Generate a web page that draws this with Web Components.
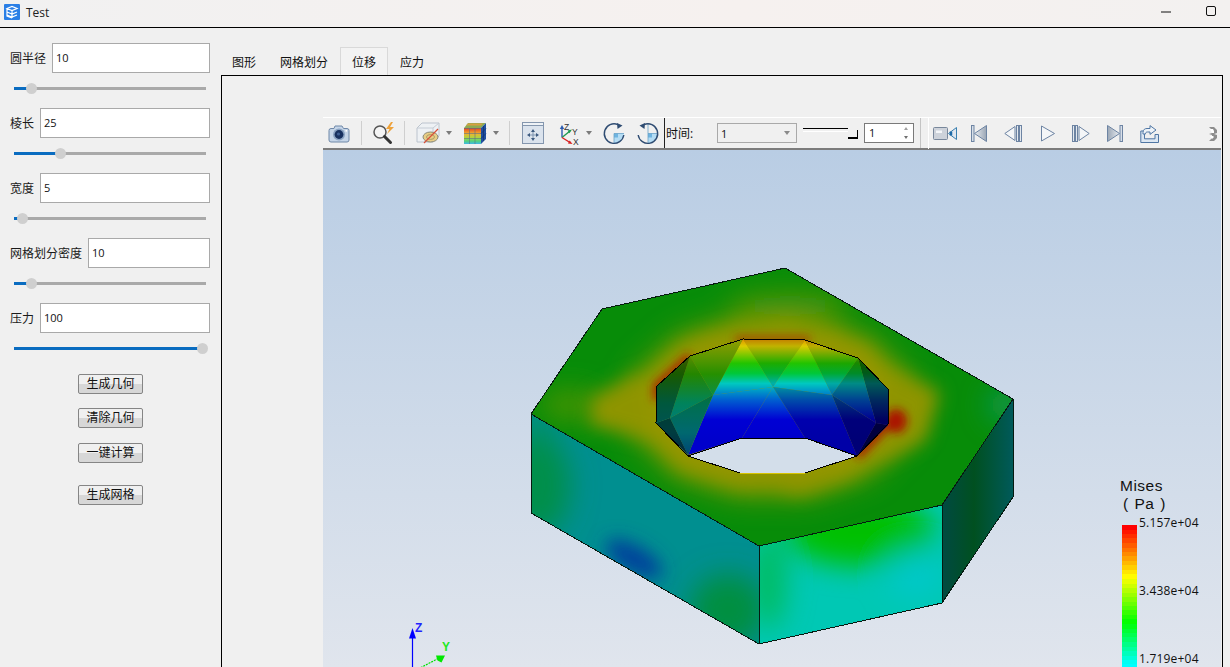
<!DOCTYPE html>
<html>
<head>
<meta charset="utf-8">
<title>Test</title>
<style>
  html, body { margin: 0; height: 667px; overflow: hidden; background: #f0f0f0; }
  body { font: 12px "Open Sans", "Noto Sans CJK SC", sans-serif; color: #111; }
  .main { display: flex; align-items: flex-start; }
</style>
</head>
<body>
<app-titlebar title-text="Test"></app-titlebar>
<div class="main">
  <param-panel>
    <param-field label="圆半径" value="10" pct="9"></param-field>
    <param-field label="棱长" value="25" pct="24"></param-field>
    <param-field label="宽度" value="5" pct="4"></param-field>
    <param-field label="网格划分密度" value="10" pct="9"></param-field>
    <param-field label="压力" value="100" pct="98"></param-field>
    <action-button style="margin-top:6px">生成几何</action-button>
    <action-button style="margin-top:14px">清除几何</action-button>
    <action-button style="margin-top:15px">一键计算</action-button>
    <action-button style="margin-top:22px">生成网格</action-button>
  </param-panel>
  <tab-widget tabs="图形,网格划分,位移,应力" active="2">
    <post-viewer></post-viewer>
  </tab-widget>
</div>

<script>
const sharedFont = `"Open Sans", "Noto Sans CJK SC", sans-serif`;

class AppTitlebar extends HTMLElement {
  constructor() {
    super();
    this.attachShadow({ mode: "open" });
    this.shadowRoot.innerHTML = `
    <style>
      :host { display: flex; align-items: center; height: 27px; border-bottom: 1px solid #000;
        background: linear-gradient(90deg, #f1f1f1, #f6f1ef 60%, #f3f1f0); font: 12px ${sharedFont}; color: #222; }
      svg { display: block; flex: none; }
      .logo { margin: -3px 6px 0 4px; }
      .name { flex: 1; margin-top: -3px; }
      .min { margin: -3px 35px 0 0; }
      .max { margin: -5px 14px 0 0; }
    </style>
    <svg class="logo" width="16" height="16" viewBox="0 0 16 16">
      <rect width="16" height="16" rx="1" fill="#2a7fe6"/>
      <path d="M3 4.500 8 2.500l5 2-5 2zM3 4.500v7.500l5 2M3 8l5 2 5-2M3 11l5 2 5-2M8 6.500V14" fill="none" stroke="#fff" stroke-width="1.200"/>
    </svg>
    <span class="name"></span>
    <svg class="min" width="10" height="2" viewBox="0 0 10 2"><path d="M0 1h10" stroke="#111"/></svg>
    <svg class="max" width="10" height="10" viewBox="0 0 10 10"><rect x=".5" y=".5" width="9" height="9" rx="1.500" fill="none" stroke="#111"/></svg>`;
  }
  connectedCallback() {
    this.shadowRoot.querySelector(".name").textContent = this.getAttribute("title-text");
  }
}
customElements.define("app-titlebar", AppTitlebar);

class ParamPanel extends HTMLElement {
  constructor() {
    super();
    this.attachShadow({ mode: "open" });
    this.shadowRoot.innerHTML = `
    <style>
      :host { display: flex; flex-direction: column; flex: none; width: 221px; box-sizing: border-box; padding-top: 15px; }
    </style>
    <slot></slot>`;
  }
}
customElements.define("param-panel", ParamPanel);

class ParamField extends HTMLElement {
  constructor() {
    super();
    this.attachShadow({ mode: "open" });
    this.shadowRoot.innerHTML = `
    <style>
      :host { display: block; height: 65px; box-sizing: border-box; padding: 0 11px 0 10px; font: 12px ${sharedFont}; color: #1a1a1a; }
      .row { display: flex; align-items: center; gap: 6px; height: 30px; }
      .box { flex: 1; height: 30px; box-sizing: border-box; border: 1px solid #a9a9a9; background: #fff;
        padding-left: 3px; line-height: 28px; font-size: 11px; color: #111; }
      .slider { position: relative; width: 192px; height: 3px; margin: 14px 0 0 4px; background: #a9a9a9; }
      .fill { height: 3px; background: #0a6cc0; }
      .thumb { position: absolute; top: -4px; width: 11px; height: 11px; margin-left: -5px; border-radius: 50%; background: #cfcfcf; }
    </style>
    <div class="row"><span class="lab"></span><div class="box"></div></div>
    <div class="slider"><div class="fill"></div><div class="thumb"></div></div>`;
  }
  connectedCallback() {
    const root = this.shadowRoot;
    root.querySelector(".lab").textContent = this.getAttribute("label");
    root.querySelector(".box").textContent = this.getAttribute("value");
    const pct = this.getAttribute("pct") + "%";
    root.querySelector(".fill").style.width = pct;
    root.querySelector(".thumb").style.left = pct;
  }
}
customElements.define("param-field", ParamField);

class ActionButton extends HTMLElement {
  constructor() {
    super();
    this.attachShadow({ mode: "open" });
    this.shadowRoot.innerHTML = `
    <style>
      :host { display: block; align-self: flex-start; width: 65px; height: 20px; margin-left: 78px; box-sizing: border-box;
        border: 1px solid #858585; border-radius: 2px; text-align: center;
        background: linear-gradient(#f0f0f0 0 50%, #d7d7d7 50% 100%); font: 12px/17px ${sharedFont}; color: #111; }
    </style>
    <slot></slot>`;
  }
}
customElements.define("action-button", ActionButton);

class TabWidget extends HTMLElement {
  constructor() {
    super();
    this.attachShadow({ mode: "open" });
    this.shadowRoot.innerHTML = `
    <style>
      :host { display: block; flex: none; width: 1002px; margin-top: 19px; font: 12px ${sharedFont}; color: #111; }
      .bar { display: flex; height: 28px; margin-left: -1px; }
      .tab { box-sizing: border-box; height: 28px; padding: 0 11px; line-height: 29px; border: 1px solid transparent; border-bottom: 0; }
      .tab.on { border-color: #d9d9d9; background: #f3f3f3; }
      .pane { box-sizing: border-box; height: 600px; border: 1px solid #000; padding: 41px 0 0 101px; }
    </style>
    <div class="bar"></div>
    <div class="pane"><slot></slot></div>`;
  }
  connectedCallback() {
    const bar = this.shadowRoot.querySelector(".bar");
    const active = Number(this.getAttribute("active"));
    this.getAttribute("tabs").split(",").forEach((name, i) => {
      const t = document.createElement("div");
      t.className = i === active ? "tab on" : "tab";
      t.textContent = name;
      bar.appendChild(t);
    });
  }
}
customElements.define("tab-widget", TabWidget);

// toolbar pictures, drawn in page pixels
const ICONS = {
  camera: [22, 19, `<path d="M1 6.500a2 2 0 0 1 2-2h3l1-2.500 7 0 1.500 2.500H19a2 2 0 0 1 2 2V16a2 2 0 0 1-2 2H3a2 2 0 0 1-2-2z" fill="#c5d5e8" stroke="#6f88a8"/>
    <circle cx="11" cy="10.500" r="6" fill="#8aa3c2"/><circle cx="11" cy="10.500" r="4.400" fill="#17305f"/><circle cx="10.500" cy="10" r="1.600" fill="#3d5d92"/><rect x="17.500" y="6" width="1.600" height="1.600" fill="#fff"/>`],
  zoomflash: [23, 22, `<circle cx="8" cy="10" r="6" fill="#f4f4f4" stroke="#555" stroke-width="1.500"/><path d="M12.500 14.500 18.500 20.500" stroke="#333" stroke-width="3" stroke-linecap="round"/>
    <path d="M19 0 14 7h3.500L15 12l7-7h-4l3-5z" fill="#eea23a"/>`],
  cube: [24, 22, `<path d="M1 6 6 1h17v13l-6 6H1z" fill="#eef1f4" stroke="#bcc4ce"/><path d="M1 6h16v14M17 6l6-5" fill="none" stroke="#c5ccd5"/>
    <ellipse cx="14.500" cy="15" rx="7.500" ry="5" fill="#e9cd84" stroke="#8a8a7a"/><ellipse cx="14.500" cy="15" rx="4" ry="2.400" fill="none" stroke="#a89a66"/><path d="M8 21 22 7" stroke="#d8503a" stroke-width="1.200"/>`],
  colorcube: [22, 21, `<path d="M4 0h18l-5 5H0z" fill="#8cab55"/><path d="M4 .5 2 2.500h5L9 .5zM9 .5 7 2.500h5L14 .5zM14 .5 12 2.500h5l2-2z" fill="#d8a040"/>
    <rect x="0" y="5" width="17" height="16" fill="url(#cc)"/><path d="M17 5l5-5v16l-5 5z" fill="#1f4fa0"/><path d="M0 5.500h17M0 10.500h17M0 15.500h17M5.500 5v16M11 5v16" stroke="#5a7088" stroke-width=".6"/><path d="M19.500 3v15M17 10.500l5-5M17 15.500l5-5" stroke="#12306a" stroke-width=".7"/>
    <defs><linearGradient id="cc" x1="0" y1="0" x2="0" y2="1"><stop offset="0" stop-color="#e6401f"/><stop offset=".35" stop-color="#f2b030"/><stop offset=".62" stop-color="#a8d840"/><stop offset=".82" stop-color="#50d080"/><stop offset="1" stop-color="#40b8e8"/></linearGradient></defs>`],
  fit: [22, 22, `<rect x=".5" y=".5" width="21" height="21" fill="#dbe3ed" stroke="#8496ae"/><rect x=".5" y=".5" width="21" height="3" fill="#eef2f6" stroke="#8496ae"/>
    <path d="M11 7 9 10h4zM11 19l-2-3h4zM5 13l3-2v4zM17 13l-3-2v4z" fill="#3c5a80"/><path d="M8 13h6M11 10v6" stroke="#7f95b0"/>`],
  axes: [22, 23, `<path d="M4 15.500V6" stroke="#2a5ab0" stroke-width="1.400"/><path d="M4 3 1.800 7h4.400z" fill="#2a5ab0"/><path d="M4 15.500 12 9" stroke="#1e9a50" stroke-width="1.400"/><path d="M14 7.500l-4.500 1 2 2.800z" fill="#1e9a50"/><path d="M4 15.500l8 5" stroke="#d82020" stroke-width="1.400"/><path d="M14.500 22l-4.600-.6 1.800-3z" fill="#d82020"/>
    <text x="6" y="7.500" font-size="8.500" font-family="Liberation Sans" fill="#333">Z</text><text x="14" y="12.500" font-size="8.500" font-family="Liberation Sans" fill="#333">Y</text><text x="15" y="22.500" font-size="8.500" font-family="Liberation Sans" fill="#333">X</text>`],
  rotcw: [22, 21, `<path d="M11 10.500h10A10 10 0 0 1 11 20.500z" fill="#b4dcf4"/><path d="M11 10.500h4v4h-4z" fill="#6fb4e0"/><path d="M11 10.500v10M11 10.500h10" stroke="#6aa2c8" stroke-width=".8"/>
    <path d="M15 1.600A9.800 9.800 0 1 0 20.800 12" fill="none" stroke="#2f4c72" stroke-width="1.400"/><path d="M14 0l5.500 2.500L14.500 6z" fill="#2f4c72"/>`],
  rotccw: [22, 21, `<path d="M11 10.500h10A10 10 0 0 1 11 20.500z" fill="#b4dcf4"/><path d="M11 10.500h4v4h-4z" fill="#6fb4e0"/><path d="M11 1v19.500M11 10.500h10" stroke="#6aa2c8" stroke-width=".8"/>
    <path d="M7 1.600A9.800 9.800 0 1 1 1.200 12" fill="none" stroke="#2f4c72" stroke-width="1.400"/><path d="M8 0 2.500 2.500 7.500 6z" fill="#2f4c72"/>`],
  video: [24, 15, `<rect x=".5" y="1.500" width="14" height="12" rx="1" fill="#cdd2da" stroke="#78879b"/><rect x="3" y="4.500" width="6" height="2.500" fill="#f4f6f9"/>
    <path d="M15.500 7.500 23.500 1.500v12z" fill="#dfe7f0" stroke="#3a80b0"/><path d="M18 5.500v4" stroke="#1d6aa8" stroke-width="2.500"/>`],
  first: [16, 17, `<rect x=".5" y=".5" width="2.500" height="16" fill="#d8dfe8" stroke="#6d84a3"/><path d="M15.500 .5v16L3.500 8.500z" fill="url(#f1)" stroke="#6d84a3"/>
    <defs><linearGradient id="f1"><stop offset="0" stop-color="#e8ecf1"/><stop offset="1" stop-color="#9aa6b5"/></linearGradient></defs>`],
  prev: [18, 17, `<path d="M11 1.500v14L.8 8.500z" fill="#f4f6f8" stroke="#6d84a3"/><rect x="12.500" y=".5" width="2" height="16" fill="#e4e9ef" stroke="#6d84a3"/><rect x="15.500" y=".5" width="2" height="16" fill="#e4e9ef" stroke="#6d84a3"/>`],
  play: [14, 17, `<path d="M.5 1v15L13.500 8.500z" fill="#f4f6f8" stroke="#6d84a3"/>`],
  next: [18, 17, `<rect x=".5" y=".5" width="2" height="16" fill="#e4e9ef" stroke="#6d84a3"/><rect x="3.500" y=".5" width="2" height="16" fill="#e4e9ef" stroke="#6d84a3"/><path d="M7 1.500v14l10.200-7z" fill="#f4f6f8" stroke="#6d84a3"/>`],
  last: [16, 17, `<path d="M.5 .5v16l12-8z" fill="url(#l1)" stroke="#6d84a3"/><rect x="13" y=".5" width="2.500" height="16" fill="#d8dfe8" stroke="#6d84a3"/>
    <defs><linearGradient id="l1"><stop offset="0" stop-color="#9aa6b5"/><stop offset="1" stop-color="#e8ecf1"/></linearGradient></defs>`],
  share: [19, 18, `<path d="M.8 6H4.500v7.800H15V9.500h3.500v8H.8z" fill="#dbe6f2" stroke="#4f76a4"/><path d="M3 7.500C3 4.500 5 3.500 7 3.500h3V.6l6 4.400-6 4.400V7H7.500C6 7 5.500 7.800 5.500 9H3z" fill="#eef3f8" stroke="#4f76a4"/>`],
  grip: [8, 17, `<path d="M0 2h5l3 3v3L5 9l3 1v3l-3 3H0l3-3v-3L0 9l3-1V5z" fill="#8d8d8d"/><path d="M1 4h3l1 2v2H3z" fill="#fff"/><path d="M1 11h3l1 1-2 2z" fill="#fff"/>`]
};

class ToolIcon extends HTMLElement {
  constructor() {
    super();
    this.attachShadow({ mode: "open" });
  }
  connectedCallback() {
    const [w, h, body] = ICONS[this.getAttribute("name")];
    this.shadowRoot.innerHTML = `
    <style>:host { display: block; flex: none; } svg { display: block; overflow: visible; }</style>
    <svg width="${w}" height="${h}" viewBox="0 0 ${w} ${h}">${body}</svg>`;
  }
}
customElements.define("tool-icon", ToolIcon);

class ToolSep extends HTMLElement {
  constructor() {
    super();
    this.attachShadow({ mode: "open" });
    this.shadowRoot.innerHTML = `<style>:host { display: block; flex: none; width: 1px; height: 24px; background: #cfcfcf; }</style>`;
  }
}
customElements.define("tool-sep", ToolSep);

class DropArrow extends HTMLElement {
  constructor() {
    super();
    this.attachShadow({ mode: "open" });
    this.shadowRoot.innerHTML = `<style>:host { display: block; flex: none; width: 0; height: 0; border: 3.5px solid transparent; border-top: 4px solid #7b7b7b; border-bottom: 0; }</style>`;
  }
}
customElements.define("drop-arrow", DropArrow);

class PostToolbar extends HTMLElement {
  constructor() {
    super();
    this.attachShadow({ mode: "open" });
    this.shadowRoot.innerHTML = `
    <style>
      :host { display: flex; align-items: stretch; height: 33px; box-sizing: border-box; background: #f0f0f0;
        border-top: 1px solid #fff; border-bottom: 2px solid #7c7c7c; font: 12px ${sharedFont}; color: #111; }
      .group { display: flex; align-items: center; flex: none; }
      .left { width: 342px; padding-left: 5px; box-sizing: border-box; border-right: 1px solid #222; }
      .time { width: 256px; padding-left: 1px; box-sizing: border-box; border-right: 1px solid #c4c4c4; }
      .player { flex: 1; padding-left: 4px; border-left: 1px solid #fff; margin-left: 7px; margin-bottom: -1px; }
      .combo { box-sizing: border-box; width: 80px; height: 20px; margin-left: 22px; border: 1px solid #a9a9a9; display: flex; align-items: center;
        justify-content: space-between; padding: 0 6px 0 3px; font-size: 11px; }
      .combo i { border: 3.5px solid transparent; border-top: 4px solid #8a8a8a; border-bottom: 0; }
      .track { position: relative; width: 55px; height: 11px; margin-left: 6px; box-sizing: border-box; }
      .track b { position: absolute; left: 0; right: 10px; top: 0; height: 2px; border-top: 1px solid #000; border-bottom: 1px solid #fff; }
      .track u { position: absolute; right: 0; bottom: 0; width: 10px; height: 9px; box-sizing: border-box; border-right: 1px solid #000; border-bottom: 2px solid #000; }
      .spin { position: relative; box-sizing: border-box; width: 50px; height: 20px; margin-left: 6px; background: #fff; border: 1px solid #7a7a7a;
        padding-left: 4px; line-height: 18px; font-size: 11px; }
      .spin i { position: absolute; right: 5px; width: 0; border: 2.5px solid transparent; }
      .spin i.up { top: 3px; border-bottom: 3px solid #a0a0a0; border-top: 0; }
      .spin i.dn { bottom: 3px; border-top: 3px solid #707070; border-bottom: 0; }
    </style>
    <div class="group left">
      <tool-icon name="camera"></tool-icon>
      <tool-sep style="margin-left:11px"></tool-sep>
      <tool-icon name="zoomflash" style="margin-left:10px"></tool-icon>
      <tool-sep style="margin-left:9px"></tool-sep>
      <tool-icon name="cube" style="margin-left:11px"></tool-icon>
      <drop-arrow style="margin-left:6px"></drop-arrow>
      <tool-icon name="colorcube" style="margin-left:12px"></tool-icon>
      <drop-arrow style="margin-left:7px"></drop-arrow>
      <tool-sep style="margin-left:10px"></tool-sep>
      <tool-icon name="fit" style="margin-left:12px"></tool-icon>
      <tool-icon name="axes" style="margin-left:14px"></tool-icon>
      <drop-arrow style="margin-left:6px"></drop-arrow>
      <tool-icon name="rotcw" style="margin-left:11px"></tool-icon>
      <tool-icon name="rotccw" style="margin-left:12px"></tool-icon>
    </div>
    <div class="group time">
      <span style="width:29px;white-space:nowrap">时间:</span>
      <div class="combo"><span>1</span><i></i></div>
      <div class="track"><b></b><u></u></div>
      <div class="spin">1<i class="up"></i><i class="dn"></i></div>
    </div>
    <div class="group player">
      <tool-icon name="video"></tool-icon>
      <tool-icon name="first" style="margin-left:14px"></tool-icon>
      <tool-icon name="prev" style="margin-left:17px"></tool-icon>
      <tool-icon name="play" style="margin-left:19px"></tool-icon>
      <tool-icon name="next" style="margin-left:17px"></tool-icon>
      <tool-icon name="last" style="margin-left:17px"></tool-icon>
      <tool-icon name="share" style="margin-left:17px"></tool-icon>
      <tool-icon name="grip" style="margin-left:50px"></tool-icon>
    </div>`;
  }
}
customElements.define("post-toolbar", PostToolbar);

// hole wall facets: points, black over the colour ramp, which ramp
const FACETS = [
  ["743,339 805,340 773,387", .12, "ramp"],
  ["743,339 773,387 713,395", 0, "ramp"],
  ["805,340 832,395 773,387", 0, "ramp"],
  ["773,387 742,438 805,438", 0, "ramp"],
  ["773,387 713,395 688,455 742,438", 0, "ramp"],
  ["773,387 832,395 857,456 805,438", .18, "ramp"],
  ["690,356 743,339 713,395", .12, "rampSide"],
  ["690,356 713,395 670,418", .18, "rampSide"],
  ["670,418 713,395 688,455", .3, "rampSide"],
  ["657,386 690,356 670,418 656,423", .45, "rampSide"],
  ["656,423 670,418 688,455", .6, "rampSide"],
  ["805,340 858,358 832,395", .15, "ramp"],
  ["858,358 876,423 832,395", .3, "ramp"],
  ["832,395 876,423 857,456", .42, "ramp"],
  ["858,358 888,389 888,425 876,423", .55, "ramp"],
  ["876,423 888,425 857,456", .7, "ramp"]
];

class FemScene extends HTMLElement {
  constructor() {
    super();
    this.attachShadow({ mode: "open" });
    const facets = FACETS.map(([p, k, r]) =>
      `<polygon points="${p}" fill="url(#${r})"/><polygon points="${p}" fill="#000" opacity="${k}"/>`).join("");
    this.shadowRoot.innerHTML = `
    <style>
      :host { display: block; position: relative; height: 517px; overflow: hidden;
        background: linear-gradient(#b9cde4, #e0e5ed); }
      svg { display: block; }
      .axis { font: bold 12px "Liberation Sans", sans-serif; }
    </style>
    <svg width="898" height="517" viewBox="323 150 898 517">
      <defs>
        <filter id="b4" x="-40%" y="-40%" width="180%" height="180%"><feGaussianBlur stdDeviation="4"/></filter>
        <filter id="b9" x="-30%" y="-30%" width="160%" height="160%"><feGaussianBlur stdDeviation="9"/></filter>
        <filter id="b14" x="-50%" y="-50%" width="200%" height="200%"><feGaussianBlur stdDeviation="14"/></filter>
        <clipPath id="topClip"><polygon points="531,414 602,309 785,268 1013,399 942,505 759,546"/></clipPath>
        <clipPath id="leftClip"><polygon points="531,414 759,546 759,644 531,513"/></clipPath>
        <clipPath id="frontClip"><polygon points="759,546 942,505 942,603 759,644"/></clipPath>
        <linearGradient id="ramp" gradientUnits="userSpaceOnUse" x1="0" y1="339" x2="0" y2="440">
          <stop offset="0" stop-color="#e09000"/>
          <stop offset=".07" stop-color="#dccc00"/>
          <stop offset=".24" stop-color="#22c400"/>
          <stop offset=".34" stop-color="#00c83a"/>
          <stop offset=".44" stop-color="#00c8c0"/>
          <stop offset=".6" stop-color="#0060d0"/>
          <stop offset=".8" stop-color="#0000d4"/>
          <stop offset="1" stop-color="#0000cc"/>
        </linearGradient>
        <linearGradient id="rampSide" gradientUnits="userSpaceOnUse" x1="0" y1="339" x2="0" y2="456">
          <stop offset="0" stop-color="#a8b400"/>
          <stop offset=".3" stop-color="#2ca400"/>
          <stop offset=".55" stop-color="#00a070"/>
          <stop offset=".8" stop-color="#0096a0"/>
          <stop offset="1" stop-color="#0060a8"/>
        </linearGradient>
        <linearGradient id="rightFace" gradientUnits="userSpaceOnUse" x1="942" y1="0" x2="1013" y2="0">
          <stop offset="0" stop-color="#004a42"/>
          <stop offset=".45" stop-color="#005020"/>
          <stop offset="1" stop-color="#005a5a"/>
        </linearGradient>
      </defs>

      <g clip-path="url(#topClip)">
        <rect x="520" y="260" width="500" height="290" fill="#078c08"/>
        <g filter="url(#b14)">
          <polygon points="743,339 805,340 858,358 888,389 888,424 857,456 805,473 740,473 688,456 656,423 657,386 690,356" fill="#6a9400" stroke="#6a9400" stroke-width="50"/>
          <ellipse cx="790" cy="306" rx="60" ry="12" fill="#52940a"/>
          <ellipse cx="570" cy="405" rx="30" ry="14" fill="#4c9400"/>
          <ellipse cx="1005" cy="405" rx="16" ry="16" fill="#0a9a60"/>
        </g>
        <g filter="url(#b9)">
          <polygon points="743,339 805,340 858,358 888,389 888,424 857,456 805,473 740,473 688,456 656,423 657,386 690,356" fill="#949600" stroke="#949600" stroke-width="30"/>
          <polygon points="640,372 590,398 590,425 650,440" fill="#8e9400"/>
          <polygon points="890,368 940,392 925,440 875,465" fill="#8e9400"/>
          <polygon points="700,335 785,318 850,335" fill="#8a9600"/>
          <polygon points="700,470 800,495 860,475" fill="#8e9400"/>
        </g>
        <g filter="url(#b4)">
          <path d="M690,356 L657,386 V400" fill="none" stroke="#a82800" stroke-width="8"/>
          <ellipse cx="896" cy="421" rx="11" ry="12" fill="#aa1400"/>
          <path d="M888,424 L857,456" fill="none" stroke="#a82800" stroke-width="9"/>
          <path d="M735,339 H810" fill="none" stroke="#a83400" stroke-width="5"/>
        </g>
      </g>

      <g clip-path="url(#leftClip)">
        <rect x="525" y="410" width="240" height="240" fill="#008f90"/>
        <g filter="url(#b14)">
          <ellipse cx="538" cy="485" rx="32" ry="50" fill="#058f48"/>
          <ellipse cx="728" cy="610" rx="38" ry="36" fill="#058f40"/>
          <ellipse cx="540" cy="425" rx="14" ry="12" fill="#0a9060"/>
        </g>
        <g filter="url(#b9)">
          <ellipse cx="634" cy="559" rx="32" ry="13" fill="#00409c" transform="rotate(30 634 559)"/>
        </g>
      </g>

      <g clip-path="url(#frontClip)">
        <rect x="755" y="500" width="190" height="150" fill="#00c8b4"/>
        <g filter="url(#b14)">
          <ellipse cx="860" cy="532" rx="75" ry="34" fill="#00c000"/>
          <ellipse cx="768" cy="580" rx="18" ry="50" fill="#00bc60"/>
          <ellipse cx="915" cy="575" rx="28" ry="24" fill="#00c8c8"/>
        </g>
      </g>

      <polygon points="942,505 1013,399 1013,497 942,603" fill="url(#rightFace)"/>

      ${facets}
      <polygon points="688,456 742,438 805,438 857,456 805,473 740,473" fill="#d3deea"/>

      <g fill="none" stroke="#061a10" stroke-width="1" shape-rendering="crispEdges">
        <polygon points="531,414 602,309 785,268 1013,399 942,505 759,546"/>
        <polyline points="531,414 531,513 759,644 942,603 1013,497 1013,399"/>
        <path d="M759,546V644M942,505V603"/>
      </g>
      <g fill="none" stroke="#000" stroke-width="1" shape-rendering="crispEdges">
        <polyline points="740,473 688,456 656,423 657,386 690,356 743,339 805,340 858,358 888,389 888,424 857,456 805,473"/>
        <polyline points="688,456 742,438 805,438 857,456"/>
        <path d="M740,473H805" stroke="#d8c400"/>
      </g>

      <path d="M412.500 638V667" stroke="#0000ff" stroke-width="1.200"/>
      <path d="M412.500 628 409 638.500h7z" fill="#0000ff"/>
      <text class="axis" x="415" y="631.500" fill="#2222ff">Z</text>
      <path d="M441 657 420 668" stroke="#00e000" stroke-width="1.200" stroke-dasharray="2 1"/>
      <path d="M436 655.500h9l-3.500 7-4-2z" fill="#00e800"/>
      <text class="axis" x="442" y="651" fill="#22e822">Y</text>
    </svg>
    <color-legend></color-legend>`;
  }
}
customElements.define("fem-scene", FemScene);

class ColorLegend extends HTMLElement {
  constructor() {
    super();
    this.attachShadow({ mode: "open" });
    // stepped bar: red at the top, through yellow and green, to cyan
    const stops = [[255, 0, 0], [255, 255, 0], [0, 255, 0], [0, 255, 255]];
    const at = [0, 50, 95, 137];
    const bands = [];
    for (let y = 0; y < 142; y += 4.5) {
      let i = at.findIndex((v, n) => y < at[n + 1]);
      if (i < 0) i = 2;
      const t = Math.min(1, (y - at[i]) / (at[i + 1] - at[i]));
      const c = stops[i].map((v, n) => Math.round(v + (stops[i + 1][n] - v) * t));
      bands.push(`rgb(${c}) ${y}px ${y + 4.5}px`);
    }
    this.shadowRoot.innerHTML = `
    <style>
      :host { position: absolute; left: 797px; top: 326px; width: 110px; height: 195px; color: #111; font-family: ${sharedFont}; }
      .title { position: absolute; left: 0; top: 1px; width: 43px; font: 15.5px/18px "Liberation Sans", sans-serif; letter-spacing: .5px; text-align: center; white-space: nowrap; }
      .title div { height: 18px; }
      .title .unit { margin-left: 3px; word-spacing: 1px; }
      .bar { position: absolute; left: 2px; top: 49px; width: 15px; height: 142px; background: linear-gradient(${bands.join(",")}); }
      .val { position: absolute; left: 19px; font-size: 12px; line-height: 14px; white-space: nowrap; letter-spacing: .2px; }
    </style>
    <div class="title"><div>Mises</div><div class="unit">( Pa )</div></div>
    <div class="bar"></div>
    <div class="val" style="top:40px">5.157e+04</div>
    <div class="val" style="top:108px">3.438e+04</div>
    <div class="val" style="top:176px">1.719e+04</div>`;
  }
}
customElements.define("color-legend", ColorLegend);

class PostViewer extends HTMLElement {
  constructor() {
    super();
    this.attachShadow({ mode: "open" });
    this.shadowRoot.innerHTML = `
    <style>:host { display: block; width: 898px; }</style>
    <post-toolbar></post-toolbar>
    <fem-scene></fem-scene>`;
  }
}
customElements.define("post-viewer", PostViewer);
</script>
</body>
</html>
